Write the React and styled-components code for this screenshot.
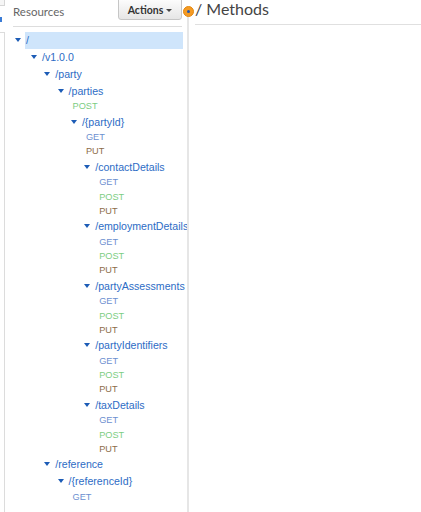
import React from "react";
import styled, { createGlobalStyle } from "styled-components";

const GlobalStyle = createGlobalStyle`
  html, body {
    margin: 0;
    padding: 0;
    background: #ffffff;
    overflow: hidden;
  }
  * {
    box-sizing: border-box;
  }
`;

const Root = styled.div`
  display: flex;
  height: 100vh;
  width: 100%;
  font-family: "Liberation Sans", Arial, sans-serif;
`;

const LeftStrip = styled.div`
  width: 5px;
  display: flex;
  flex-direction: column;
`;

const StripTop = styled.div`
  height: 6px;
  border-right: 1px solid #d6d6d6;
  border-bottom: 1px solid #d6d6d6;
  background: #f6f6f6;
`;

const StripMark = styled.div`
  width: 2px;
  height: 5px;
  margin-top: 11px;
  background: #3a7bd5;
`;

const StripBody = styled.div`
  flex: 1;
  margin-top: 10px;
  border-top: 1px solid #dcdcdc;
  border-right: 1px solid #dcdcdc;
`;

const ResourcesPanel = styled.div`
  width: 182px;
  padding: 0 4px 0 8px;
  display: flex;
  flex-direction: column;
`;

const PanelHeader = styled.div`
  height: 27px;
  display: flex;
  align-items: flex-start;
  justify-content: space-between;
  border-bottom: 1px solid #dddddd;
  margin-right: 1px;
`;

const PanelTitle = styled.div`
  font-family: Lato, "Open Sans", sans-serif;
  font-size: 11.5px;
  color: #666666;
  padding-top: 5px;
`;

const ActionsButton = styled.div`
  width: 64px;
  height: 22px;
  margin-top: -2px;
  border: 1px solid #c6c6c6;
  border-radius: 0 0 3px 3px;
  background: linear-gradient(#fdfdfd, #e6e6e6);
  display: flex;
  align-items: center;
  justify-content: center;
  gap: 3px;
  padding-top: 2px;
  font-family: Lato, "Open Sans", sans-serif;
  font-weight: 700;
  font-size: 10.5px;
  color: #333333;
`;

const Caret = styled.span`
  width: 0;
  height: 0;
  border-left: 3px solid transparent;
  border-right: 3px solid transparent;
  border-top: 3px solid #444444;
`;

const Tree = styled.div`
  margin-top: 5px;
  display: flex;
  flex-direction: column;
`;

const NodeRow = styled.div`
  height: 16.75px;
  display: flex;
  align-items: center;
`;

const Toggle = styled.span`
  width: 12px;
  flex: none;
  display: flex;
  align-items: center;
  padding-left: 2px;
  &::before {
    content: "";
    width: 0;
    height: 0;
    border-left: 3px solid transparent;
    border-right: 3px solid transparent;
    border-top: 4px solid #1c5cb6;
  }
`;

const Label = styled.span`
  flex: 1;
  height: 100%;
  display: flex;
  align-items: center;
  padding-left: 1px;
  font-size: 10.6px;
  color: #2d6cc5;
  white-space: nowrap;
  background: ${(p) => (p.$selected ? "#cfe5fb" : "transparent")};
`;

const Children = styled.div`
  display: flex;
  flex-direction: column;
  padding-left: ${(p) => p.$indent}px;
`;

const MethodList = styled.div`
  display: flex;
  flex-direction: column;
  padding-left: 17px;
`;

const methodColors = {
  GET: "#6c8fd0",
  POST: "#7ccd82",
  PUT: "#8d6c49",
};

const Method = styled.div`
  height: 14.25px;
  display: flex;
  align-items: center;
  font-size: 9.2px;
  color: ${(p) => methodColors[p.$verb]};
`;

const Divider = styled.div`
  width: 2px;
  margin-top: 15px;
  background: #e6e6e6;
  position: relative;
`;

const Handle = styled.div`
  position: absolute;
  left: -4.5px;
  top: -9px;
  width: 11px;
  height: 11px;
  border-radius: 50%;
  background: #f59b24;
  border: 1px solid #e38810;
  display: flex;
  align-items: center;
  justify-content: center;
  &::after {
    content: "";
    width: 3px;
    height: 3px;
    border-radius: 50%;
    background: #2458ad;
  }
`;

const MethodsPanel = styled.div`
  flex: 1;
  padding-left: 6px;
  display: flex;
  flex-direction: column;
`;

const MethodsHeader = styled.div`
  height: 25px;
  border-bottom: 1px solid #e0e0e0;
  font-family: Lato, "Open Sans", sans-serif;
  font-size: 16px;
  line-height: 16px;
  color: #444444;
  padding-top: 1px;
`;

const crud = ["GET", "POST", "PUT"];

const tree = {
  path: "/",
  selected: true,
  children: [
    {
      path: "/v1.0.0",
      children: [
        {
          path: "/party",
          children: [
            {
              path: "/parties",
              methods: ["POST"],
              children: [
                {
                  path: "/{partyId}",
                  methods: ["GET", "PUT"],
                  children: [
                    { path: "/contactDetails", methods: crud },
                    { path: "/employmentDetails", methods: crud },
                    { path: "/partyAssessments", methods: crud },
                    { path: "/partyIdentifiers", methods: crud },
                    { path: "/taxDetails", methods: crud },
                  ],
                },
              ],
            },
          ],
        },
        {
          path: "/reference",
          children: [{ path: "/{referenceId}", methods: ["GET"] }],
        },
      ],
    },
  ],
};

const ResourceNode = ({ node, depth }) => (
  <>
    <NodeRow>
      <Toggle />
      <Label $selected={node.selected}>{node.path}</Label>
    </NodeRow>
    {node.methods && (
      <MethodList>
        {node.methods.map((m) => (
          <Method key={m} $verb={m}>
            {m}
          </Method>
        ))}
      </MethodList>
    )}
    {node.children && (
      <Children $indent={depth === 0 ? 16 : 13.3}>
        {node.children.map((c) => (
          <ResourceNode key={c.path} node={c} depth={depth + 1} />
        ))}
      </Children>
    )}
  </>
);

export default function App() {
  return (
    <>
      <GlobalStyle />
      <Root>
        <LeftStrip>
          <StripTop />
          <StripMark />
          <StripBody />
        </LeftStrip>
        <ResourcesPanel>
          <PanelHeader>
            <PanelTitle>Resources</PanelTitle>
            <ActionsButton>
              Actions
              <Caret />
            </ActionsButton>
          </PanelHeader>
          <Tree>
            <ResourceNode node={tree} depth={0} />
          </Tree>
        </ResourcesPanel>
        <Divider>
          <Handle />
        </Divider>
        <MethodsPanel>
          <MethodsHeader>/ Methods</MethodsHeader>
        </MethodsPanel>
      </Root>
    </>
  );
}
